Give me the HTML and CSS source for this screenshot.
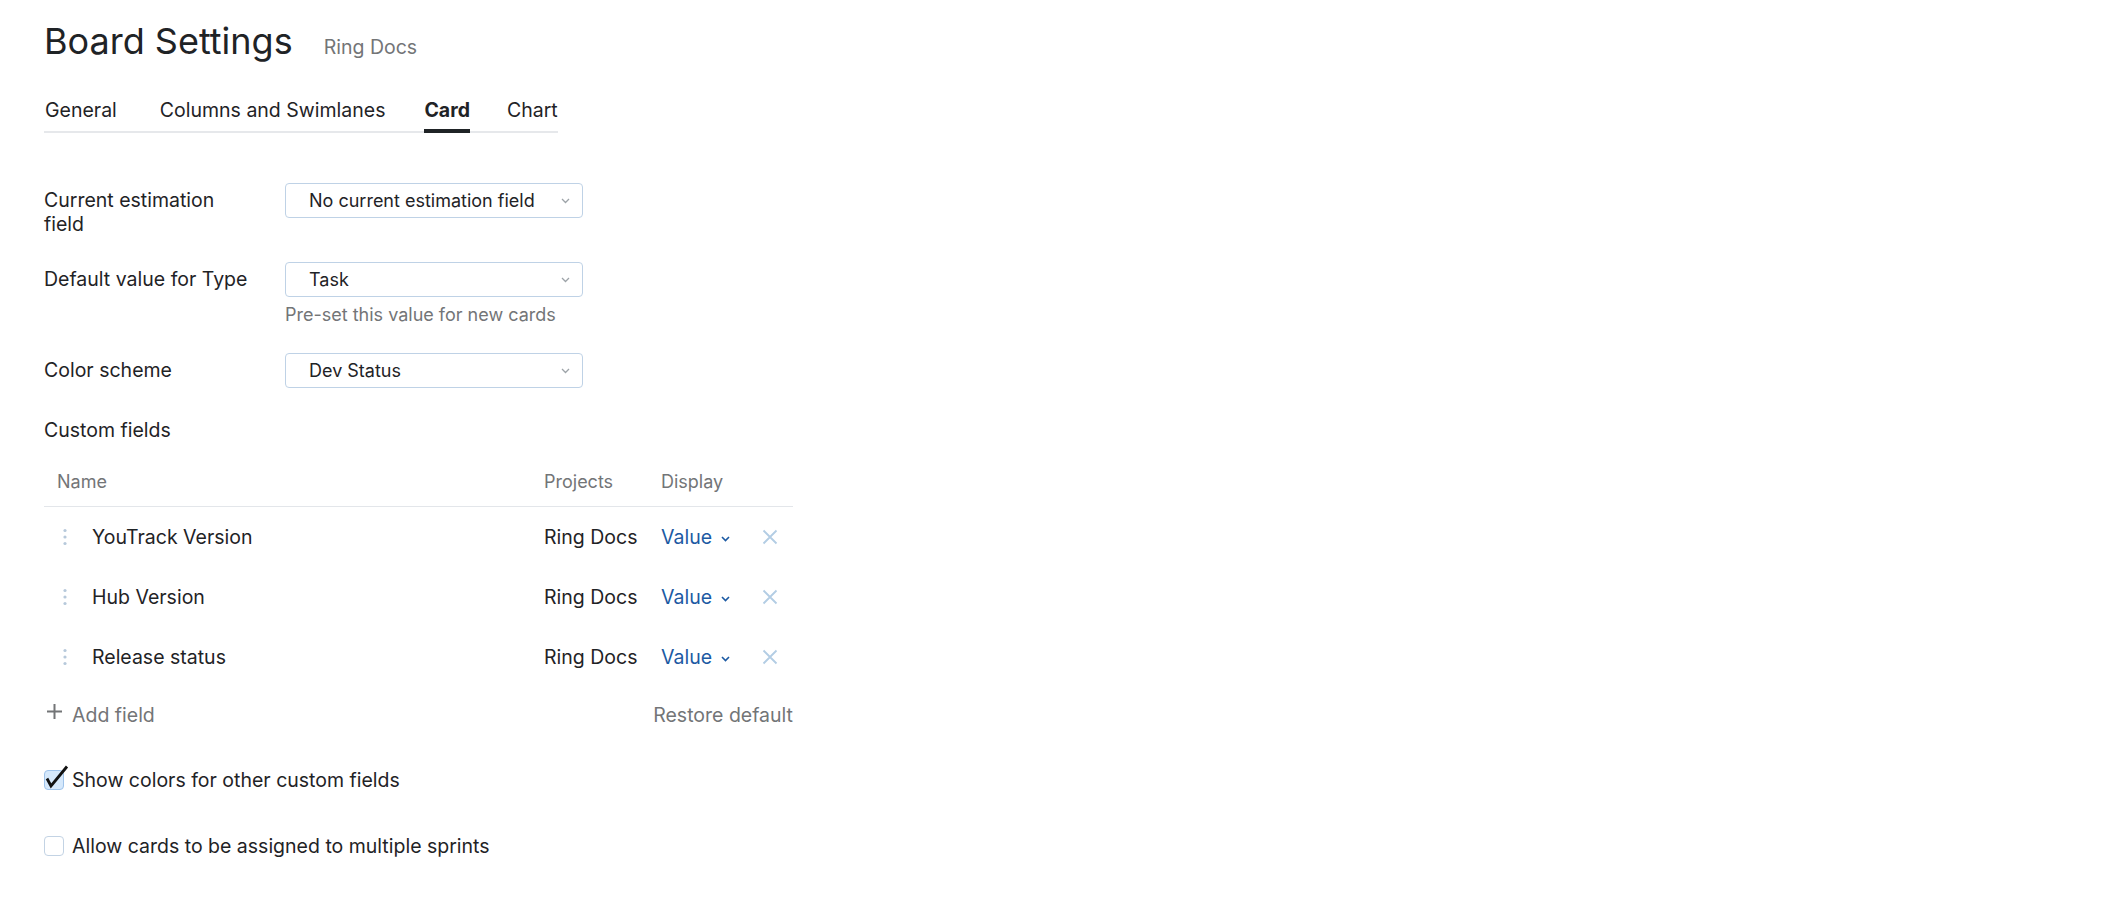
FILE: index.html
```html
<!DOCTYPE html>
<html lang="en">
	<head>
		<meta charset="UTF-8" />
		<meta name="viewport" content="width=device-width, initial-scale=1.0" />
		<title>Board Settings</title>
		<link rel="stylesheet" href="styles.css">
	</head>
	<body>
		<div class="page">
			<div class="page-header">
				<h1>Board Settings</h1>
				<span class="board-name">Ring Docs</span>
			</div>

			<nav class="tabs">
				<a class="tab" href="#">General</a>
				<a class="tab" href="#">Columns and Swimlanes</a>
				<a class="tab active" href="#">Card</a>
				<a class="tab" href="#">Chart</a>
			</nav>

			<form class="settings">
				<div class="form-row">
					<label class="form-label">Current estimation field</label>
					<div class="form-control">
						<button type="button" class="select">
							No current estimation field
							<svg class="chevron" width="9" height="6" viewBox="0 0 9 6"><path d="M1 1l3.5 3.5L8 1" /></svg>
						</button>
					</div>
				</div>

				<div class="form-row">
					<label class="form-label">Default value for Type</label>
					<div class="form-control">
						<button type="button" class="select">
							Task
							<svg class="chevron" width="9" height="6" viewBox="0 0 9 6"><path d="M1 1l3.5 3.5L8 1" /></svg>
						</button>
						<div class="hint">Pre-set this value for new cards</div>
					</div>
				</div>

				<div class="form-row">
					<label class="form-label">Color scheme</label>
					<div class="form-control">
						<button type="button" class="select">
							Dev Status
							<svg class="chevron" width="9" height="6" viewBox="0 0 9 6"><path d="M1 1l3.5 3.5L8 1" /></svg>
						</button>
					</div>
				</div>

				<div class="section-title">Custom fields</div>

				<div class="fields-table">
					<div class="fields-head">
						<div class="cell name-head">Name</div>
						<div class="cell">Projects</div>
						<div class="cell">Display</div>
						<div class="cell"></div>
					</div>

					<div class="fields-row">
						<div class="cell name-cell">
							<svg class="drag" width="4" height="18" viewBox="0 0 4 18"><circle cx="2" cy="2.5" r="1.6" /><circle cx="2" cy="9" r="1.6" /><circle cx="2" cy="15.5" r="1.6" /></svg>
							YouTrack Version
						</div>
						<div class="cell">Ring Docs</div>
						<div class="cell display">Value <svg class="value-chevron" width="9" height="6" viewBox="0 0 9 6"><path d="M1 1l3.5 3.5L8 1" /></svg></div>
						<div class="cell"><svg class="remove" width="16" height="16" viewBox="0 0 16 16"><path d="M1.5 1.5l13 13M14.5 1.5l-13 13" /></svg></div>
					</div>

					<div class="fields-row">
						<div class="cell name-cell">
							<svg class="drag" width="4" height="18" viewBox="0 0 4 18"><circle cx="2" cy="2.5" r="1.6" /><circle cx="2" cy="9" r="1.6" /><circle cx="2" cy="15.5" r="1.6" /></svg>
							Hub Version
						</div>
						<div class="cell">Ring Docs</div>
						<div class="cell display">Value <svg class="value-chevron" width="9" height="6" viewBox="0 0 9 6"><path d="M1 1l3.5 3.5L8 1" /></svg></div>
						<div class="cell"><svg class="remove" width="16" height="16" viewBox="0 0 16 16"><path d="M1.5 1.5l13 13M14.5 1.5l-13 13" /></svg></div>
					</div>

					<div class="fields-row">
						<div class="cell name-cell">
							<svg class="drag" width="4" height="18" viewBox="0 0 4 18"><circle cx="2" cy="2.5" r="1.6" /><circle cx="2" cy="9" r="1.6" /><circle cx="2" cy="15.5" r="1.6" /></svg>
							Release status
						</div>
						<div class="cell">Ring Docs</div>
						<div class="cell display">Value <svg class="value-chevron" width="9" height="6" viewBox="0 0 9 6"><path d="M1 1l3.5 3.5L8 1" /></svg></div>
						<div class="cell"><svg class="remove" width="16" height="16" viewBox="0 0 16 16"><path d="M1.5 1.5l13 13M14.5 1.5l-13 13" /></svg></div>
					</div>
				</div>

				<div class="fields-footer">
					<button type="button" class="add-field">
						<svg class="plus" width="15" height="15" viewBox="0 0 15 15"><path d="M7.5 0v15M0 7.5h15" /></svg>
						Add field
					</button>
					<button type="button" class="restore">Restore default</button>
				</div>

				<label class="checkbox">
					<span class="checkbox-box checked">
						<svg class="checkmark" width="26" height="24" viewBox="0 0 26 24"><path d="M3 13.5l4 7.5L23 1.5" /></svg>
					</span>
					Show colors for other custom fields
				</label>

				<label class="checkbox">
					<span class="checkbox-box"></span>
					Allow cards to be assigned to multiple sprints
				</label>
			</form>
		</div>
	</body>
</html>
```

FILE: styles.css
```css
body {
	margin: 0;
	font-family: Inter, "Noto Sans", sans-serif;
	color: #1f2326;
	background: #fff;
}

.page {
	padding: 20px 44px;
}

.page-header {
	display: flex;
	align-items: baseline;
	gap: 31px;
}

h1 {
	margin: 0;
	font-size: 36px;
	font-weight: 400;
	line-height: 42px;
}

.board-name {
	font-size: 19.5px;
	color: #737577;
}

.tabs {
	display: flex;
	width: max-content;
	margin-top: 36px;
	padding-left: 1px;
	border-bottom: 2px solid #e6e8eb;
}

.tab {
	font-size: 19.5px;
	line-height: 24px;
	padding-bottom: 7px;
	margin-bottom: -2px;
	margin-right: 39px;
	border-bottom: 4px solid transparent;
	color: #1f2326;
	text-decoration: none;
}

.tab:first-child {
	margin-right: 43px;
}

.tab:last-child {
	margin-right: 0;
}

.tab.active {
	margin-right: 37px;
	font-weight: 700;
	border-bottom-color: #1f2326;
}

.settings {
	margin-top: 50px;
}

.form-row {
	display: flex;
	align-items: flex-start;
	margin-bottom: 26px;
}

.form-label {
	width: 212px;
	margin-right: 29px;
	margin-top: 5px;
	font-size: 19.5px;
	line-height: 24px;
}

.select {
	display: flex;
	align-items: center;
	justify-content: space-between;
	width: 298px;
	height: 35px;
	box-sizing: border-box;
	padding: 0 12px 0 23px;
	border: 1px solid #bfd2e6;
	border-radius: 4px;
	background: #fff;
	font-family: inherit;
	font-size: 18px;
	color: #1f2326;
	cursor: pointer;
}

.chevron {
	fill: none;
	stroke: #9da3a8;
	stroke-width: 1.3;
}

.hint {
	margin-top: 6px;
	font-size: 18px;
	line-height: 24px;
	color: #737577;
}

.section-title {
	margin-top: 30px;
	font-size: 19.5px;
	line-height: 24px;
}

.fields-table {
	width: 749px;
	margin-top: 28px;
}

.fields-head,
.fields-row {
	display: grid;
	grid-template-columns: 500px 117px 101px 1fr;
	align-items: center;
}

.fields-head {
	padding-bottom: 12px;
	border-bottom: 1px solid #e3e6ea;
	font-size: 18px;
	line-height: 24px;
	color: #737577;
}

.name-head {
	padding-left: 13px;
}

.fields-row {
	height: 60px;
	font-size: 19.5px;
	line-height: 24px;
}

.name-cell {
	display: flex;
	align-items: center;
	gap: 25px;
	padding-left: 19px;
}

.drag {
	fill: #b7c9db;
}

.display {
	display: flex;
	align-items: center;
	gap: 9px;
	color: #1c5aa3;
}

.value-chevron {
	fill: none;
	stroke: #1c5aa3;
	stroke-width: 1.6;
	margin-top: 3px;
}

.remove {
	display: block;
	fill: none;
	stroke: #b3cde4;
	stroke-width: 1.8;
}

.fields-footer {
	display: flex;
	justify-content: space-between;
	width: 749px;
	padding-top: 16px;
}

.add-field,
.restore {
	display: flex;
	align-items: center;
	padding: 0;
	border: none;
	background: none;
	font-family: inherit;
	font-size: 19.5px;
	line-height: 24px;
	color: #737577;
	cursor: pointer;
}

.plus {
	margin: 0 10px 8px 3px;
	stroke: #737577;
	stroke-width: 2;
}

.checkbox {
	display: flex;
	align-items: center;
	gap: 8px;
	margin-top: 41px;
	font-size: 19.5px;
	line-height: 24px;
}

.checkbox + .checkbox {
	margin-top: 42px;
}

.checkbox-box {
	position: relative;
	width: 20px;
	height: 20px;
	box-sizing: border-box;
	border: 1px solid #c3d3e4;
	border-radius: 4px;
	background: #fff;
}

.checkbox-box.checked {
	background: #d5e8fb;
	border-color: #9fc3ea;
}

.checkmark {
	position: absolute;
	left: -1px;
	top: -6px;
	fill: none;
	stroke: #111;
	stroke-width: 2.8;
}
```
